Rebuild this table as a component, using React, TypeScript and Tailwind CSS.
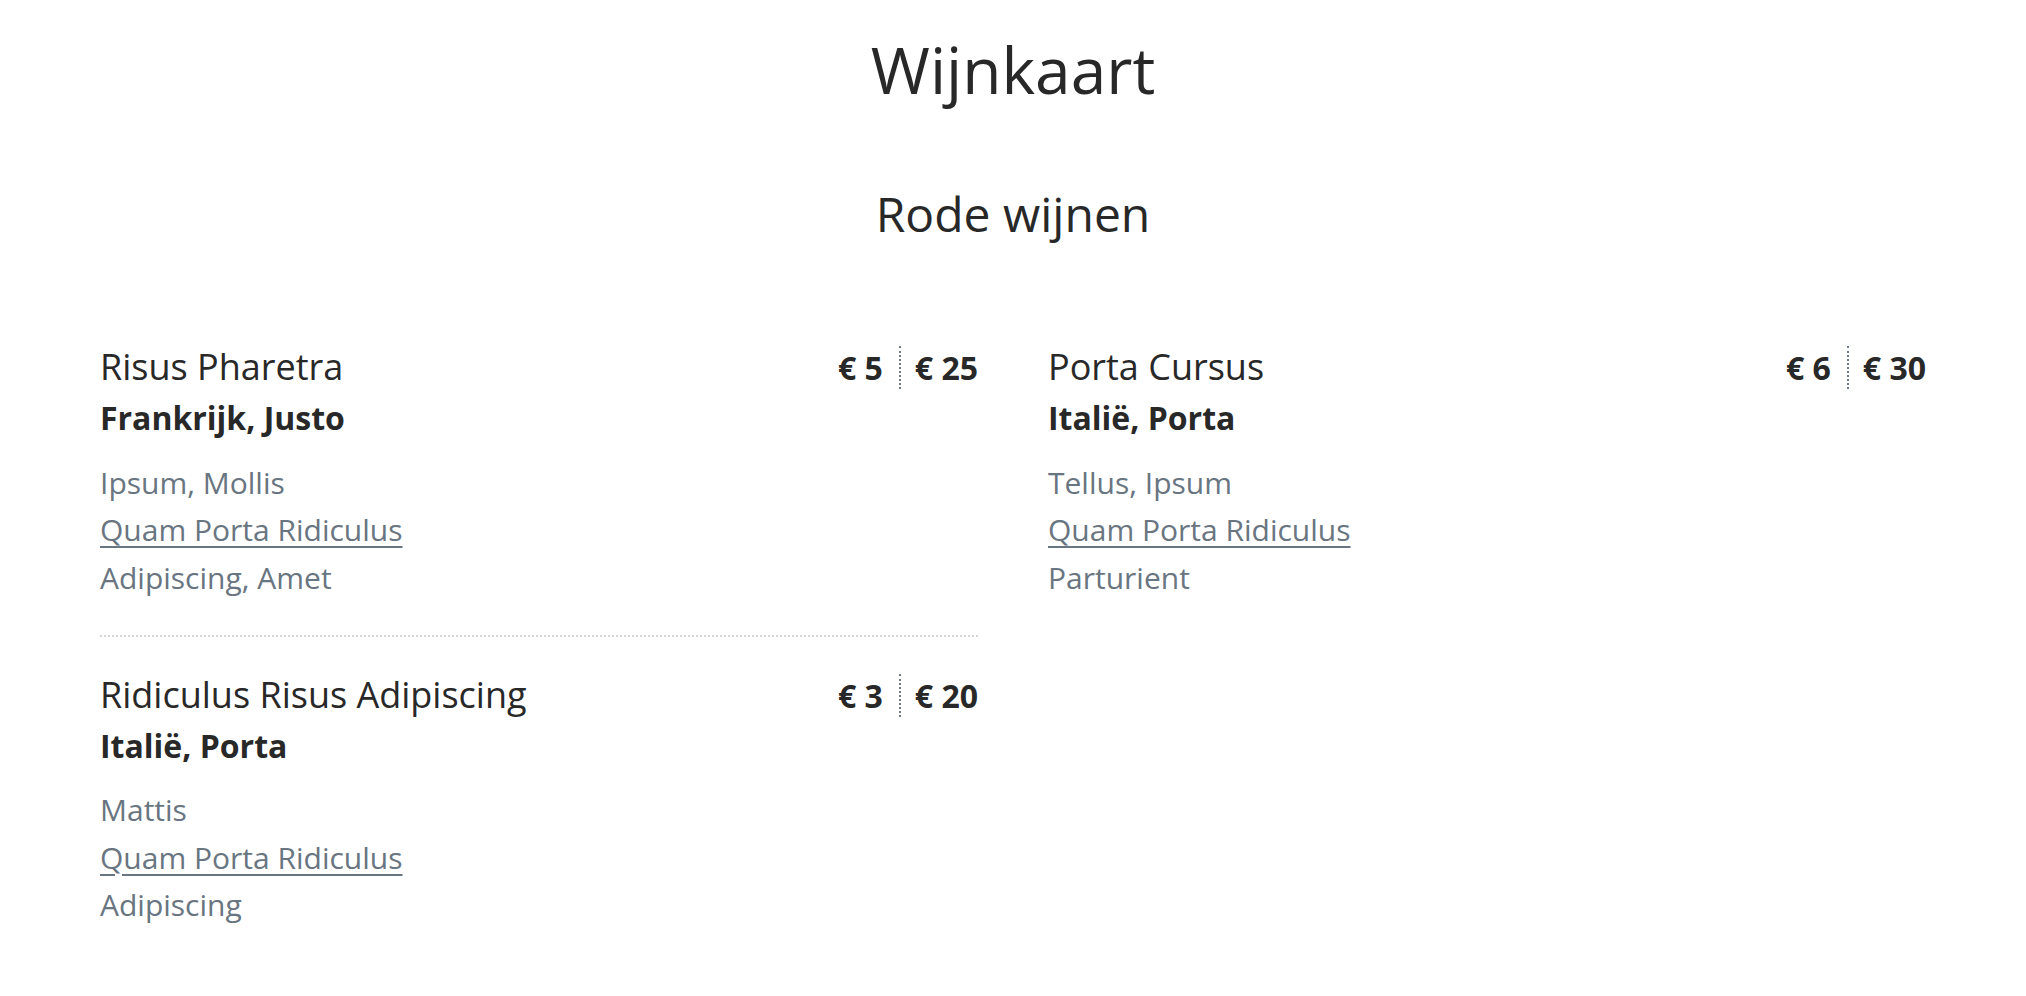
import React from 'react';

interface Wine {
  naam: string;
  herkomst: string;
  glas: string;
  fles: string;
  regels: string[];
}

const links: Wine[] = [
  {
    naam: 'Risus Pharetra',
    herkomst: 'Frankrijk, Justo',
    glas: '€ 5',
    fles: '€ 25',
    regels: ['Ipsum, Mollis', 'Quam Porta Ridiculus', 'Adipiscing, Amet'],
  },
  {
    naam: 'Ridiculus Risus Adipiscing',
    herkomst: 'Italië, Porta',
    glas: '€ 3',
    fles: '€ 20',
    regels: ['Mattis', 'Quam Porta Ridiculus', 'Adipiscing'],
  },
];

const rechts: Wine[] = [
  {
    naam: 'Porta Cursus',
    herkomst: 'Italië, Porta',
    glas: '€ 6',
    fles: '€ 30',
    regels: ['Tellus, Ipsum', 'Quam Porta Ridiculus', 'Parturient'],
  },
];

const WineItem: React.FC<{ wine: Wine; divider: boolean }> = ({ wine, divider }) => (
  <div
    className={`pt-[35.5px] pb-[34px] ${divider ? 'border-b-2 border-dotted border-[#d6d6d6]' : ''}`}
  >
    <div className="flex items-baseline justify-between">
      <h3 className="text-[36px] leading-[43px]">{wine.naam}</h3>
      <div className="flex text-[32px] font-bold leading-[43px]">
        <span className="pr-[16px]">{wine.glas}</span>
        <span className="border-l-2 border-dotted border-[#6f7b87] pl-[14px]">{wine.fles}</span>
      </div>
    </div>
    <p className="mt-[9px] text-[32px] font-bold leading-[40px]">{wine.herkomst}</p>
    <ul className="mt-[20.5px] text-[30px] leading-[47.5px] text-[#697581]">
      {wine.regels.map((r, i) => (
        <li key={i}>
          {i === 1 ? (
            <a href="#" className="underline decoration-2 underline-offset-[5px]">
              {r}
            </a>
          ) : (
            r
          )}
        </li>
      ))}
    </ul>
  </div>
);

export default function App() {
  return (
    <div className="min-h-screen bg-white font-['Open_Sans',sans-serif] text-[#282828]">
      <h1 className="pt-[39px] text-center text-[64px] leading-[62px]">Wijnkaart</h1>
      <h2 className="mt-[89px] text-center text-[48px] leading-[48px]">Rode wijnen</h2>
      <div className="mt-[71.5px] grid grid-cols-2 gap-x-[70px] px-[100px]">
        <div>
          {links.map((w, i) => (
            <WineItem key={w.naam} wine={w} divider={i < links.length - 1} />
          ))}
        </div>
        <div>
          {rechts.map((w, i) => (
            <WineItem key={w.naam} wine={w} divider={i < rechts.length - 1} />
          ))}
        </div>
      </div>
    </div>
  );
}
